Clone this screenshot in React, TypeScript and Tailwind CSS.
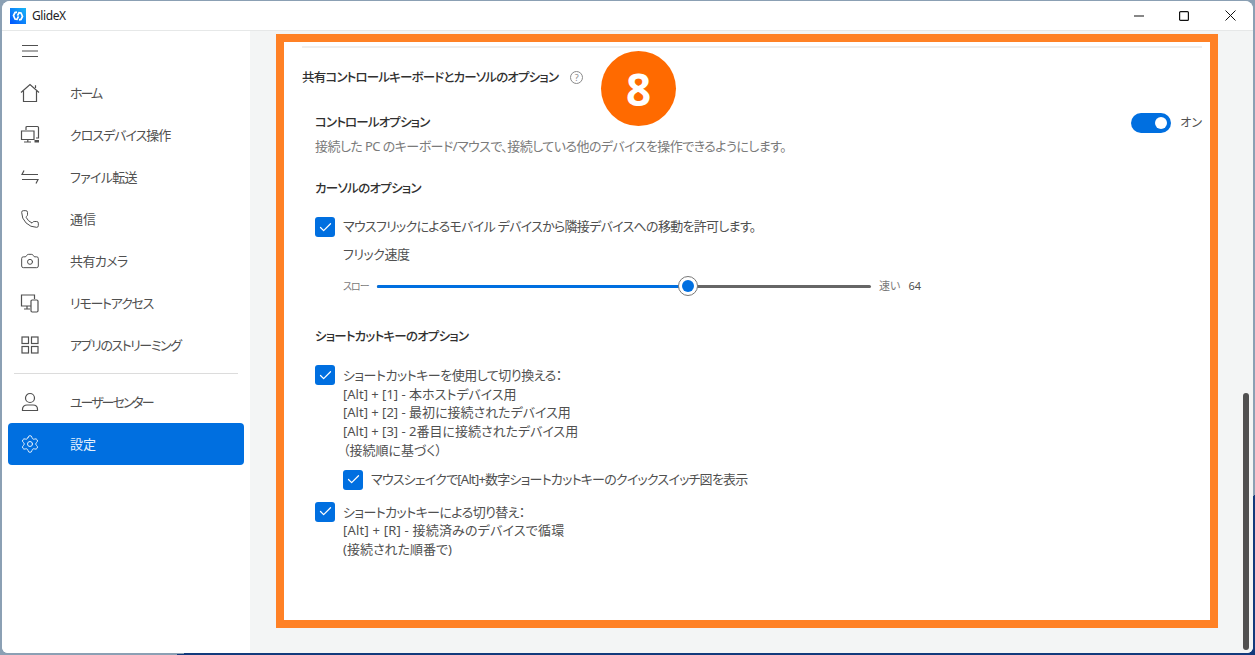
import { Camera, Phone, Settings, Check } from "lucide-react";
import type { ReactNode } from "react";

const iconProps = { width: 20, height: 20, viewBox: "0 0 20 20", fill: "none", stroke: "currentColor", strokeWidth: 1.2 };

const HomeIcon = () => (
  <svg {...iconProps}>
    <path d="M1 9.5 10 1.5l9 8M3.5 8v10.5h13V8M15.5 5V2.2" />
  </svg>
);
const CrossIcon = () => (
  <svg {...iconProps}>
    <path d="M6 5V2.5a1 1 0 0 1 1-1h10.5a1 1 0 0 1 1 1V13H16M1.5 6h12.5v8.5H1.5zM4 17h7M7.8 14.5V17" />
    <rect x="14.5" y="15" width="4.5" height="2.5" fill="currentColor" stroke="none" />
  </svg>
);
const TransferIcon = () => (
  <svg {...iconProps}>
    <path d="M4 3.5 2 7.5h16M2 12.5h16l-2 4" />
  </svg>
);
const RemoteIcon = () => (
  <svg {...iconProps}>
    <path d="M11 13H1.5V2h13v4M4 16h6M7 13v3" />
    <rect x="11" y="7" width="7" height="12" rx="1.2" />
  </svg>
);
const GridIcon = () => (
  <svg {...iconProps}>
    <rect x="2" y="2" width="6.5" height="6.5" />
    <rect x="11.5" y="2" width="6.5" height="6.5" />
    <rect x="2" y="11.5" width="6.5" height="6.5" />
    <rect x="11.5" y="11.5" width="6.5" height="6.5" />
  </svg>
);
const UserIcon = () => (
  <svg {...iconProps}>
    <circle cx="10" cy="6" r="4.5" />
    <path d="M2.5 18.5v-1.2c0-2.6 2-4.3 4.5-4.3h6c2.5 0 4.5 1.7 4.5 4.3v1.2z" />
  </svg>
);

// katakana in the original font is narrower, so each label carries its own tracking
const nav: { icon: ReactNode; label: string; track: string }[] = [
  { icon: <HomeIcon />, label: "ホーム", track: "tracking-[-2px]" },
  { icon: <CrossIcon />, label: "クロスデバイス操作", track: "tracking-[-1px]" },
  { icon: <TransferIcon />, label: "ファイル転送", track: "tracking-[-0.7px]" },
  { icon: <Phone size={20} strokeWidth={1.2} />, label: "通信", track: "" },
  { icon: <Camera size={20} strokeWidth={1.2} />, label: "共有カメラ", track: "tracking-[-0.6px]" },
  { icon: <RemoteIcon />, label: "リモートアクセス", track: "tracking-[-1.25px]" },
  { icon: <GridIcon />, label: "アプリのストリーミング", track: "tracking-[-1.45px]" },
];

function NavRow({ icon, label, track, active }: { icon: ReactNode; label: string; track: string; active?: boolean }) {
  return (
    <div className={`flex h-[42px] items-center rounded-[4px] pl-3 ${active ? "bg-[#006fe0] text-[#e4f0fc]" : "text-[#505050]"}`}>
      <span className="flex w-5 justify-center">{icon}</span>
      <span className={`ml-[30px] pt-[2px] text-[13px] ${track}`}>{label}</span>
    </div>
  );
}

function Box() {
  return (
    <span className="flex h-5 w-5 shrink-0 items-center justify-center rounded-[3px] bg-[#006fe0] text-white">
      <Check size={15} strokeWidth={2} />
    </span>
  );
}

function Lines({ lines }: { lines: [string, string][] }) {
  return (
    <div className="pt-px text-[13px] leading-[18.7px] text-[#505050]">
      {lines.map(([text, track]) => (
        <div key={text} className={`whitespace-pre ${track}`}>{text}</div>
      ))}
    </div>
  );
}

export default function App() {
  return (
    <div className="h-[655px] w-[1255px] overflow-hidden bg-[linear-gradient(171.6deg,#8ba0b4_81%,#123a7c_81%)] pb-[2px] pl-[2px] pr-[2px] pt-px font-['Noto_Sans','Noto_Sans_CJK_JP',sans-serif] [font-feature-settings:'palt']">
      <div className="flex h-full flex-col overflow-hidden rounded-t-[8px] rounded-b-[6px] bg-white">
        <header className="flex h-[30px] shrink-0 items-center border-b border-[#e6e8e8] bg-white">
          <svg width="16" height="16" viewBox="0 0 16 16" className="ml-2">
            <defs>
              <linearGradient id="logo" x1="0" y1="1" x2="1" y2="0">
                <stop offset="0" stopColor="#0052ff" />
                <stop offset="1" stopColor="#19b8f5" />
              </linearGradient>
            </defs>
            <rect width="16" height="16" fill="url(#logo)" />
            <path d="M7 4.2 5 4.6 3.5 7.5 5 11l2 .4 1.5-3M9 11.8l2-.4L12.5 8.5 11 5l-2-.4-1.5 3" fill="none" stroke="#fff" strokeWidth="1.7" />
          </svg>
          <span className="ml-[6px] text-[12px] tracking-[-0.4px] text-[#222]">GlideX</span>
          <div className="ml-auto flex items-center text-[#111]">
            <span className="flex w-[45px] justify-center">
              <svg width="10" height="10" viewBox="0 0 10 10" fill="none" stroke="currentColor" strokeWidth="1.1"><path d="M0 5h10" /></svg>
            </span>
            <span className="flex w-[46px] justify-center">
              <svg width="10" height="10" viewBox="0 0 10 10" fill="none" stroke="currentColor" strokeWidth="1.2"><rect x=".6" y=".6" width="8.8" height="8.8" rx="1" /></svg>
            </span>
            <span className="flex w-[46px] justify-center">
              <svg width="11" height="11" viewBox="0 0 11 11" fill="none" stroke="currentColor" strokeWidth="1"><path d="m.5.5 10 10M10.5.5l-10 10" /></svg>
            </span>
          </div>
        </header>
        <div className="flex min-h-0 flex-1">
          <aside className="w-[248px] shrink-0 bg-white px-[6px]">
            <div className="flex h-[41px] items-center pb-[2px] pl-[14px] text-[#505050]">
              <svg width="16" height="14" viewBox="0 0 16 14" fill="none" stroke="currentColor" strokeWidth="1.2">
                <path d="M0 1.5h16M0 7h16M0 12.5h16" />
              </svg>
            </div>
            {nav.map((n) => (
              <NavRow key={n.label} icon={n.icon} label={n.label} track={n.track} />
            ))}
            <div className="mx-[6px] my-[7px] h-px bg-[#dcdcdc]" />
            <NavRow icon={<UserIcon />} label="ユーザーセンター" track="tracking-[-2px]" />
            <NavRow icon={<Settings size={20} strokeWidth={1.2} />} label="設定" track="" active />
          </aside>
          <main className="relative flex min-w-0 flex-1 bg-[#f3f5f5] pl-[26px] pt-[3px]">
            <section className="h-[594px] w-[942px] border-[8px] border-[#ff8125] bg-white pl-[18px] pr-[8px] pt-[4px]">
              <div className="h-[2px] w-full bg-[#eeeeee]" />
              <div className="mt-[20px] flex h-[19px] items-center">
                <span className="pt-[2px] text-[12.5px] font-medium tracking-[-0.83px] text-[#303030]">共有コントロールキーボードとカーソルのオプション</span>
                <span className="ml-3 flex h-[13px] w-[13px] items-center justify-center rounded-full border border-[#8a8a8a] text-[9px] leading-none text-[#8a8a8a]">?</span>
              </div>
              <div className="pl-[13px]">
                <div className="mt-[26px] flex h-[19px] items-center justify-between">
                  <span className="pt-[2px] text-[12.5px] font-medium tracking-[-0.85px] text-[#303030]">コントロールオプション</span>
                  <div className="flex items-center">
                    <span className="flex h-5 w-10 items-center justify-end rounded-full bg-[#006fe0] pr-[4px]">
                      <span className="h-3 w-3 rounded-full bg-white" />
                    </span>
                    <span className="ml-[9px] text-[12px] text-[#505050]">オン</span>
                  </div>
                </div>
                <div className="mt-[5px] h-[19px] text-[13px] leading-[19px] tracking-[-0.55px] text-[#7a7a7a]">接続した PC のキーボード/マウスで、接続している他のデバイスを操作できるようにします。</div>
                <div className="mt-[23px] h-[19px] text-[12.5px] font-medium leading-[19px] tracking-[-0.7px] text-[#303030]">カーソルのオプション</div>
                <div className="mt-[19px] flex h-5 items-center gap-2">
                  <Box />
                  <span className="text-[13px] tracking-[-0.7px] text-[#505050]">マウスフリックによるモバイル デバイスから隣接デバイスへの移動を許可します。</span>
                </div>
                <div className="ml-7 mt-[8px] h-[19px] text-[13px] leading-[19px] tracking-[-0.5px] text-[#505050]">フリック速度</div>
                <div className="ml-7 mt-[12px] flex h-5 items-center text-[11px] text-[#7a7a7a]">
                  <span className="w-[34px] text-[10px] tracking-[-1px]">スロー</span>
                  <div className="relative flex h-[3px] w-[494px] rounded-full bg-[#666666]">
                    <div className="h-full w-[310px] rounded-full bg-[#006fe0]" />
                    <span className="absolute left-[301px] top-[-8.5px] flex h-5 w-5 items-center justify-center rounded-full border border-[#777] bg-white">
                      <span className="h-3 w-3 rounded-full bg-[#006fe0]" />
                    </span>
                  </div>
                  <span className="ml-2">速い</span>
                  <span className="ml-[8px] text-[#505050]">64</span>
                </div>
                <div className="mt-[31px] h-[18px] text-[12.5px] font-medium leading-[19px] tracking-[-0.78px] text-[#303030]">ショートカットキーのオプション</div>
                <div className="mt-[20px] flex items-start gap-2">
                  <Box />
                  <Lines
                    lines={[
                      ["ショートカットキーを使用して切り換える：", "tracking-[-0.5px]"],
                      ["[Alt] + [1] - 本ホストデバイス用", ""],
                      ["[Alt] + [2] - 最初に接続されたデバイス用", ""],
                      ["[Alt] + [3] - 2番目に接続されたデバイス用", ""],
                      ["（接続順に基づく）", ""],
                    ]}
                  />
                </div>
                <div className="ml-7 mt-[10px] flex h-5 items-center gap-2">
                  <Box />
                  <span className="text-[13px] tracking-[-0.78px] text-[#505050]">マウスシェイクで[Alt]+数字ショートカットキーのクイックスイッチ図を表示</span>
                </div>
                <div className="mt-[12px] flex items-start gap-2">
                  <Box />
                  <Lines
                    lines={[
                      ["ショートカットキーによる切り替え：", "tracking-[-0.6px]"],
                      ["[Alt] + [R] - 接続済みのデバイスで循環", "tracking-[0.2px]"],
                      ["(接続された順番で)", ""],
                    ]}
                  />
                </div>
              </div>
            </section>
            <div className="ml-[4px] h-[598px] w-0 shadow-[1px_0_3px_rgba(0,0,0,0.15)]" />
            <div className="absolute bottom-[3px] right-[4px] h-[257px] w-[6px] rounded-full bg-[#505050]" />
            <div className="absolute left-[351px] top-[20px] flex h-[75px] w-[75px] items-center justify-center rounded-full bg-[#ff6a00] text-[44px] font-bold text-white">8</div>
          </main>
        </div>
      </div>
    </div>
  );
}
